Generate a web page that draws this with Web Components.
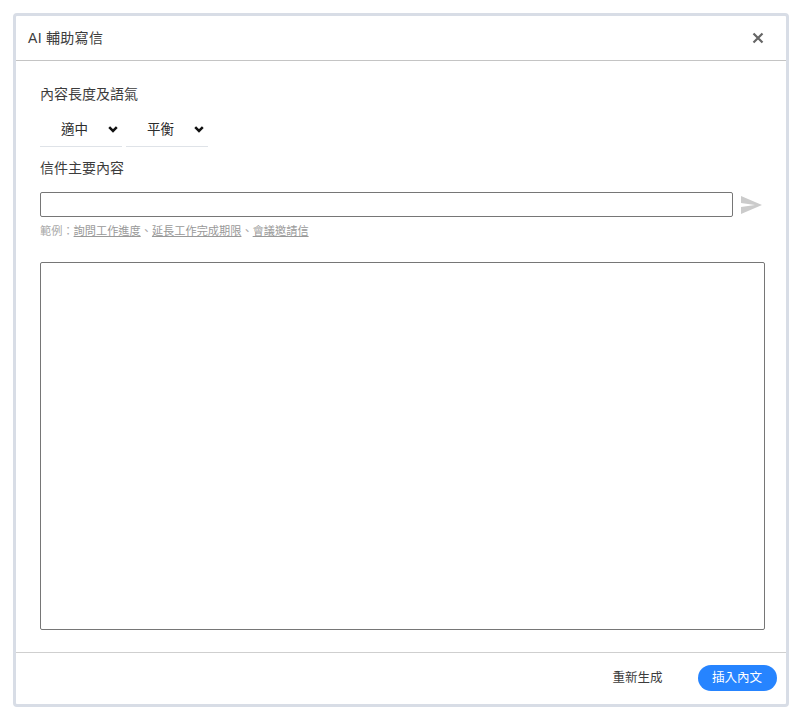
<!DOCTYPE html>
<html lang="zh-Hant">
<head>
<meta charset="utf-8">
<title>AI 輔助寫信</title>
<style>
html,body{margin:0;padding:0;background:#fff;height:100%}
body{font-family:"Liberation Sans","Noto Sans CJK TC",sans-serif;font-size:13px;color:#333}
</style>
</head>
<body>
<ai-dialog></ai-dialog>
<script>
class FieldLabel extends HTMLElement{
  constructor(){super();this.attachShadow({mode:'open'}).innerHTML=`<style>:host{display:block;box-sizing:border-box;height:18px;font-size:14px;line-height:16px;color:#3c3c3c}</style><slot></slot>`;}
}
class PlainSelect extends HTMLElement{
  constructor(){super();this.attachShadow({mode:'open'}).innerHTML=`<style>
  :host{display:flex;align-items:center;box-sizing:border-box;width:82px;height:35px;border-bottom:1px solid #dfe3e8;padding:0 0 0 21px;font-size:13.5px;color:#2c2c2c}
  span{flex:1;padding-bottom:2px}
  svg{width:10px;height:7px;margin-right:4px;display:block}
  </style><span><slot></slot></span><svg viewBox="0 0 10 7"><path d="M1.2 1.2 5 5 8.8 1.2" fill="none" stroke="#111" stroke-width="2.5"/></svg>`;}
}
class SendIcon extends HTMLElement{
  constructor(){super();this.attachShadow({mode:'open'}).innerHTML=`<style>:host{display:block;width:21px;height:18px;margin-right:3px}svg{display:block}</style><svg width="21" height="18" viewBox="0 0 21 18"><path d="M0 0 21 9 0 18 0 11 14 9 0 7Z" fill="#cbcbcb"/></svg>`;}
}
class AiDialog extends HTMLElement{
  constructor(){super();this.attachShadow({mode:'open'}).innerHTML=`<style>
  :host{display:block;box-sizing:border-box;width:776px;height:694px;margin:13px 0 0 13px;border:3px solid #d8dde6;border-radius:4px;background:#fff;font-family:"Liberation Sans","Noto Sans CJK TC",sans-serif}
  .wrap{display:flex;flex-direction:column;height:100%}
  header{display:flex;align-items:center;justify-content:space-between;box-sizing:border-box;height:45px;padding:0 22px 0 12px;border-bottom:1px solid #c4c4c4;font-size:14px;letter-spacing:.3px;color:#3c3c3c;flex:none}
  header span{padding-bottom:2px}
  header svg{display:block}
  main{flex:1;display:flex;flex-direction:column;padding:25px 21px 22px 24px;min-height:0}
  .selects{display:flex;gap:4px;margin-top:8px}
  .second{margin-top:13px}
  .row{display:flex;align-items:center;gap:8px;margin-top:14px}
  .input{flex:1;box-sizing:border-box;height:25px;border:1px solid #767676;border-radius:2px;background:#fff}
  .hint{margin-top:6px;font-size:11.2px;line-height:16px;color:#aaa}
  .hint a{color:#999;text-decoration:underline}
  .area{flex:1;margin-top:23px;border:1px solid #767676;border-radius:2px;min-height:0}
  footer{display:flex;align-items:center;justify-content:flex-end;box-sizing:border-box;height:52px;flex:none;border-top:1px solid #cfcfcf;padding:0 9.5px 2px 0;gap:35px;font-size:12.5px;color:#3c3c3c}
  footer span{padding-bottom:2px}
  .btn{display:flex;align-items:center;justify-content:center;box-sizing:border-box;width:79px;height:26px;padding-bottom:2px;border-radius:13px;background:#2684ff;color:#fff;font-size:12.5px}
  </style>
  <div class="wrap">
    <header><span>AI 輔助寫信</span>
      <svg width="12" height="12" viewBox="0 0 12 12"><path d="M1.5 1.5 10.5 10.5M10.5 1.5 1.5 10.5" stroke="#666" stroke-width="2.2" fill="none"/></svg>
    </header>
    <main>
      <field-label>內容長度及語氣</field-label>
      <div class="selects"><plain-select>適中</plain-select><plain-select>平衡</plain-select></div>
      <field-label class="second">信件主要內容</field-label>
      <div class="row"><div class="input"></div><send-icon></send-icon></div>
      <div class="hint">範例：<a>詢問工作進度</a>、<a>延長工作完成期限</a>、<a>會議邀請信</a></div>
      <div class="area"></div>
    </main>
    <footer><span>重新生成</span><div class="btn">插入內文</div></footer>
  </div>`;}
}
customElements.define('field-label',FieldLabel);
customElements.define('plain-select',PlainSelect);
customElements.define('send-icon',SendIcon);
customElements.define('ai-dialog',AiDialog);
</script>
</body>
</html>
